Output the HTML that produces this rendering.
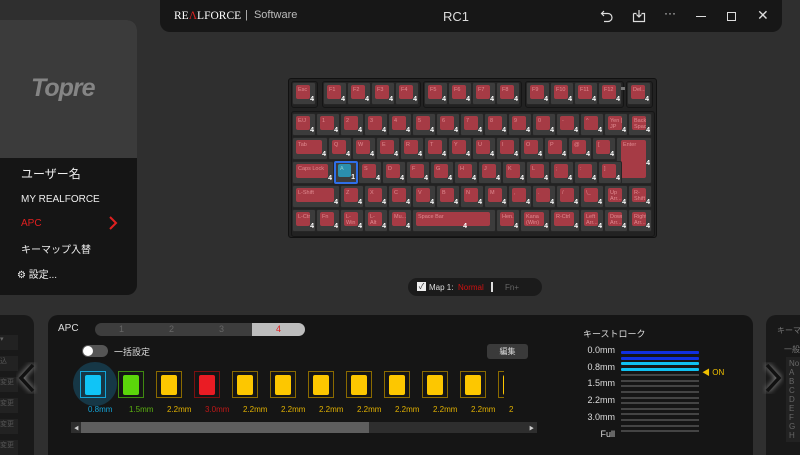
<!DOCTYPE html>
<html><head><meta charset="utf-8"><style>
*{box-sizing:border-box;margin:0;padding:0}
body{width:800px;height:455px;overflow:hidden;background:#2f2f2f;font-family:"Liberation Sans","Noto Sans CJK JP",sans-serif;color:#ddd;position:relative}
.a{position:absolute}
.title{left:160px;top:0;width:622px;height:32px;background:#171717;border-radius:0 0 10px 10px}
.lp{left:0;top:20px;width:137px;height:275px;background:#151515;border-radius:0 10px 10px 0;overflow:hidden}
.kb{left:288px;top:78px;width:369px;height:160px;background:#222;border:1px solid #111;border-radius:3px}
.k{position:absolute;height:23px;background:#3c3c3c;border:1px solid #262626;border-radius:2px}
.k i{position:absolute;left:3px;top:2px;right:5px;bottom:5px;background:#a63b45;border-radius:2px;font-style:normal;font-size:5.5px;color:#e08a90;padding:2px 0 0 2px;line-height:6px;overflow:hidden;white-space:nowrap}
.k b{position:absolute;right:1px;bottom:1px;font-size:7px;color:#fff;line-height:7px}
.grp{position:absolute;border:1px solid #151515;border-radius:3px;height:27px;top:2px}
.sw{position:absolute;top:56px;width:26px;height:27px;border:1px solid #8a6a00}
.sw div{position:absolute;left:4px;top:3px;width:16px;height:20px;background:#fdc700;border-radius:2px}
.gl{position:absolute;left:573px;width:78px;height:2px;background:#444}
</style></head><body>

<div class="a title">
 <div class="a" style="left:14px;top:10px;font-family:'Liberation Serif',serif;font-size:11.5px;color:#fff;white-space:nowrap">RE<span style="color:#d22">Λ</span>LFORCE</div>
 <div class="a" style="left:85px;top:9px;font-size:11px;color:#bbb;white-space:nowrap">|&nbsp; Software</div>
 <div class="a" style="left:283px;top:9px;font-size:13px;color:#ddd">RC1</div>
 <svg class="a" style="left:440px;top:9px" width="14" height="14" viewBox="0 0 14 14" fill="none" stroke="#ddd" stroke-width="1.2"><path d="M4 2L1.5 4.5 4 7M1.5 4.5H8a4 4 0 010 8H4"/></svg>
 <svg class="a" style="left:472px;top:9px" width="14" height="14" viewBox="0 0 14 14" fill="none" stroke="#ddd" stroke-width="1.2"><path d="M1.5 4.5h3M9.5 4.5h3v8h-11v-8M7 1v7M4.5 5.5 7 8l2.5-2.5"/></svg>
 <div class="a" style="left:504px;top:6px;font-size:12px;color:#ddd">···</div>
 <div class="a" style="left:536px;top:16px;width:10px;height:1px;background:#ddd"></div>
 <div class="a" style="left:567px;top:12px;width:9px;height:9px;border:1px solid #ddd"></div>
 <div class="a" style="left:597px;top:7px;font-size:14px;color:#ddd">✕</div>
</div>

<div class="a lp">
 <div class="a" style="left:0;top:0;width:137px;height:138px;background:#3b3b3b"></div>
 <div class="a" style="left:31px;top:54px;font-size:25px;font-weight:bold;font-style:italic;color:#858585;letter-spacing:-1px">Topre</div>
 <div class="a" style="left:21px;top:145px;font-size:12px;color:#eee">ユーザー名</div>
 <div class="a" style="left:21px;top:174px;font-size:10px;color:#eee">MY REALFORCE</div>
 <div class="a" style="left:21px;top:198px;font-size:10px;color:#e02020">APC</div>
 <svg class="a" style="left:108px;top:196px" width="10" height="14" viewBox="0 0 10 14"><path d="M2 1l6 6-6 6" stroke="#e02020" stroke-width="2" fill="none"/></svg>
 <div class="a" style="left:21px;top:221px;font-size:10px;color:#eee">キーマップ入替</div>
 <div class="a" style="left:17px;top:246px;font-size:10px;color:#eee">⚙ 設定...</div>
</div>

<div class="a kb">
 <div class="grp" style="left:2px;width:27px"></div>
 <div class="grp" style="left:33px;width:99px"></div>
 <div class="grp" style="left:134px;width:99px"></div>
 <div class="grp" style="left:236px;width:99px"></div>
 <div class="grp" style="left:337px;width:27px"></div>
 <div class="grp" style="left:2px;top:32px;width:364px;height:126px"></div>
 <div class="k" style="left:3px;top:3px;width:24px"><i>Esc</i><b>4</b></div>
 <div class="k" style="left:34px;top:3px;width:24px"><i>F1</i><b>4</b></div>
 <div class="k" style="left:58px;top:3px;width:24px"><i>F2</i><b>4</b></div>
 <div class="k" style="left:82px;top:3px;width:24px"><i>F3</i><b>4</b></div>
 <div class="k" style="left:106px;top:3px;width:24px"><i>F4</i><b>4</b></div>
 <div class="k" style="left:135px;top:3px;width:24px"><i>F5</i><b>4</b></div>
 <div class="k" style="left:159px;top:3px;width:24px"><i>F6</i><b>4</b></div>
 <div class="k" style="left:183px;top:3px;width:24px"><i>F7</i><b>4</b></div>
 <div class="k" style="left:207px;top:3px;width:24px"><i>F8</i><b>4</b></div>
 <div class="k" style="left:237px;top:3px;width:24px"><i>F9</i><b>4</b></div>
 <div class="k" style="left:261px;top:3px;width:24px"><i>F10</i><b>4</b></div>
 <div class="k" style="left:285px;top:3px;width:24px"><i>F11</i><b>4</b></div>
 <div class="k" style="left:309px;top:3px;width:24px"><i>F12</i><b>4</b></div>
 <div class="a" style="left:332px;top:8px;width:4px;height:3px;background:#777"></div>
 <div class="k" style="left:338px;top:3px;width:24px"><i>Del...</i><b>4</b></div>
 <div class="k" style="left:3px;top:34px;width:24px"><i>E/J</i><b>4</b></div>
 <div class="k" style="left:27px;top:34px;width:24px"><i>1</i><b>4</b></div>
 <div class="k" style="left:51px;top:34px;width:24px"><i>2</i><b>4</b></div>
 <div class="k" style="left:75px;top:34px;width:24px"><i>3</i><b>4</b></div>
 <div class="k" style="left:99px;top:34px;width:24px"><i>4</i><b>4</b></div>
 <div class="k" style="left:123px;top:34px;width:24px"><i>5</i><b>4</b></div>
 <div class="k" style="left:147px;top:34px;width:24px"><i>6</i><b>4</b></div>
 <div class="k" style="left:171px;top:34px;width:24px"><i>7</i><b>4</b></div>
 <div class="k" style="left:195px;top:34px;width:24px"><i>8</i><b>4</b></div>
 <div class="k" style="left:219px;top:34px;width:24px"><i>9</i><b>4</b></div>
 <div class="k" style="left:243px;top:34px;width:24px"><i>0</i><b>4</b></div>
 <div class="k" style="left:267px;top:34px;width:24px"><i>-</i><b>4</b></div>
 <div class="k" style="left:291px;top:34px;width:24px"><i>^</i><b>4</b></div>
 <div class="k" style="left:315px;top:34px;width:24px"><i>Yen |<br>JP</i><b>4</b></div>
 <div class="k" style="left:339px;top:34px;width:24px"><i>Back<br>Space</i><b>4</b></div>
 <div class="k" style="left:3px;top:58px;width:36px"><i>Tab</i><b>4</b></div>
 <div class="k" style="left:39px;top:58px;width:24px"><i>Q</i><b>4</b></div>
 <div class="k" style="left:63px;top:58px;width:24px"><i>W</i><b>4</b></div>
 <div class="k" style="left:87px;top:58px;width:24px"><i>E</i><b>4</b></div>
 <div class="k" style="left:111px;top:58px;width:24px"><i>R</i><b>4</b></div>
 <div class="k" style="left:135px;top:58px;width:24px"><i>T</i><b>4</b></div>
 <div class="k" style="left:159px;top:58px;width:24px"><i>Y</i><b>4</b></div>
 <div class="k" style="left:183px;top:58px;width:24px"><i>U</i><b>4</b></div>
 <div class="k" style="left:207px;top:58px;width:24px"><i>I</i><b>4</b></div>
 <div class="k" style="left:231px;top:58px;width:24px"><i>O</i><b>4</b></div>
 <div class="k" style="left:255px;top:58px;width:24px"><i>P</i><b>4</b></div>
 <div class="k" style="left:279px;top:58px;width:24px"><i>@</i><b>4</b></div>
 <div class="k" style="left:303px;top:58px;width:24px"><i>[</i><b>4</b></div>
 <div class="k" style="left:327px;top:58px;width:36px;height:47px"><i style="left:4px">Enter</i><b style="bottom:16px">4</b></div>
 <div class="k" style="left:3px;top:82px;width:42px"><i>Caps Lock</i><b>4</b></div>
 <div class="k" style="left:45px;top:82px;width:24px;border:2px solid #2f6fe8"><i style="background:#2b8fae;left:2px;top:1px;color:#8cc">A</i><b>1</b></div>
 <div class="k" style="left:69px;top:82px;width:24px"><i>S</i><b>4</b></div>
 <div class="k" style="left:93px;top:82px;width:24px"><i>D</i><b>4</b></div>
 <div class="k" style="left:117px;top:82px;width:24px"><i>F</i><b>4</b></div>
 <div class="k" style="left:141px;top:82px;width:24px"><i>G</i><b>4</b></div>
 <div class="k" style="left:165px;top:82px;width:24px"><i>H</i><b>4</b></div>
 <div class="k" style="left:189px;top:82px;width:24px"><i>J</i><b>4</b></div>
 <div class="k" style="left:213px;top:82px;width:24px"><i>K</i><b>4</b></div>
 <div class="k" style="left:237px;top:82px;width:24px"><i>L</i><b>4</b></div>
 <div class="k" style="left:261px;top:82px;width:24px"><i>;</i><b>4</b></div>
 <div class="k" style="left:285px;top:82px;width:24px"><i>:</i><b>4</b></div>
 <div class="k" style="left:309px;top:82px;width:24px"><i>]</i><b>4</b></div>
 <div class="k" style="left:3px;top:106px;width:48px"><i>L-Shift</i><b>4</b></div>
 <div class="k" style="left:51px;top:106px;width:24px"><i>Z</i><b>4</b></div>
 <div class="k" style="left:75px;top:106px;width:24px"><i>X</i><b>4</b></div>
 <div class="k" style="left:99px;top:106px;width:24px"><i>C</i><b>4</b></div>
 <div class="k" style="left:123px;top:106px;width:24px"><i>V</i><b>4</b></div>
 <div class="k" style="left:147px;top:106px;width:24px"><i>B</i><b>4</b></div>
 <div class="k" style="left:171px;top:106px;width:24px"><i>N</i><b>4</b></div>
 <div class="k" style="left:195px;top:106px;width:24px"><i>M</i><b>4</b></div>
 <div class="k" style="left:219px;top:106px;width:24px"><i>,</i><b>4</b></div>
 <div class="k" style="left:243px;top:106px;width:24px"><i>.</i><b>4</b></div>
 <div class="k" style="left:267px;top:106px;width:24px"><i>/</i><b>4</b></div>
 <div class="k" style="left:291px;top:106px;width:24px"><i>\_</i><b>4</b></div>
 <div class="k" style="left:315px;top:106px;width:24px"><i>Up<br>Arr...</i><b>4</b></div>
 <div class="k" style="left:339px;top:106px;width:24px"><i>R-<br>Shift</i><b>4</b></div>
 <div class="k" style="left:3px;top:130px;width:24px"><i>L-Ctrl</i><b>4</b></div>
 <div class="k" style="left:27px;top:130px;width:24px"><i>Fn</i><b>4</b></div>
 <div class="k" style="left:51px;top:130px;width:24px"><i>L-<br>Win</i><b>4</b></div>
 <div class="k" style="left:75px;top:130px;width:24px"><i>L-<br>Alt</i><b>4</b></div>
 <div class="k" style="left:99px;top:130px;width:24px"><i>Mu...</i><b>4</b></div>
 <div class="k" style="left:123px;top:130px;width:84px"><i>Space Bar</i><b style="right:28px">4</b></div>
 <div class="k" style="left:207px;top:130px;width:24px"><i>Hen...</i><b>4</b></div>
 <div class="k" style="left:231px;top:130px;width:30px"><i>Kana<br>(Win)</i><b>4</b></div>
 <div class="k" style="left:261px;top:130px;width:30px"><i>R-Ctrl</i><b>4</b></div>
 <div class="k" style="left:291px;top:130px;width:24px"><i>Left<br>Arr...</i><b>4</b></div>
 <div class="k" style="left:315px;top:130px;width:24px"><i>Down<br>Arr...</i><b>4</b></div>
 <div class="k" style="left:339px;top:130px;width:24px"><i>Right<br>Arr...</i><b>4</b></div>
</div>

<div class="a" style="left:408px;top:278px;width:134px;height:18px;background:#1b1b1b;border-radius:9px">
 <div class="a" style="left:9px;top:4px;width:9px;height:9px;background:#eee;font-size:8px;color:#333;line-height:9px;text-align:center">✓</div>
 <div class="a" style="left:21px;top:5px;font-size:8px;color:#ddd">Map 1:</div>
 <div class="a" style="left:50px;top:5px;font-size:8px;color:#d01010">Normal</div>
 <div class="a" style="left:83px;top:4px;width:2px;height:10px;background:#ddd"></div>
 <div class="a" style="left:97px;top:5px;font-size:8px;color:#666">Fn+</div>
</div>

<div class="a" style="left:0;top:315px;width:34px;height:140px;background:#191919;border-radius:0 10px 0 0;overflow:hidden">
 <div class="a" style="left:0;top:20px;width:18px;height:15px;background:#222;font-size:7px;color:#666">▾</div>
 <div class="a" style="left:0;top:41px;width:18px;height:15px;background:#222;font-size:7px;color:#555">込</div>
 <div class="a" style="left:0;top:62px;width:18px;height:15px;background:#222;font-size:7px;color:#555">変更</div>
 <div class="a" style="left:0;top:83px;width:18px;height:15px;background:#222;font-size:7px;color:#555">変更</div>
 <div class="a" style="left:0;top:104px;width:18px;height:15px;background:#222;font-size:7px;color:#555">変更</div>
 <div class="a" style="left:0;top:125px;width:18px;height:15px;background:#222;font-size:7px;color:#555">変更</div>
</div>
<svg class="a" style="left:16px;top:362px" width="22" height="32" viewBox="0 0 22 32"><path d="M17 3L5 16l12 13" stroke="#111" stroke-width="3.5" fill="none" style="filter:drop-shadow(0 0 3px #aaa)"/></svg>

<div class="a" style="left:766px;top:315px;width:34px;height:140px;background:#191919;border-radius:10px 0 0 0;overflow:hidden;white-space:nowrap">
 <div class="a" style="left:11px;top:10px;font-size:8px;color:#777">キーマ</div>
 <div class="a" style="left:18px;top:29px;font-size:8px;color:#777">一般</div>
 <div class="a" style="left:20px;top:42px;width:14px;height:85px;background:#222;font-size:8px;color:#666;line-height:9px;padding:2px 0 0 3px">No<br>A<br>B<br>C<br>D<br>E<br>F<br>G<br>H</div>
</div>
<svg class="a" style="left:762px;top:362px" width="22" height="32" viewBox="0 0 22 32"><path d="M5 3l12 13L5 29" stroke="#111" stroke-width="3.5" fill="none" style="filter:drop-shadow(0 0 3px #aaa)"/></svg>

<div class="a" style="left:48px;top:315px;width:705px;height:140px;background:#151515;border-radius:10px 10px 0 0">
 <div class="a" style="left:10px;top:8px;font-size:10px;color:#ddd">APC</div>
 <div class="a" style="left:47px;top:8px;width:210px;height:13px;background:#3d3d3d;border-radius:7px;font-size:9px;color:#666">
  <span class="a" style="left:24px;top:1px">1</span><span class="a" style="left:74px;top:1px">2</span><span class="a" style="left:124px;top:1px">3</span>
  <div class="a" style="left:157px;top:0;width:53px;height:13px;background:#bdbdbd;border-radius:0 7px 7px 0;color:#e02020;text-align:center;line-height:13px">4</div>
 </div>
 <div class="a" style="left:34px;top:30px;width:26px;height:12px;background:#555;border-radius:6px"><div class="a" style="left:1px;top:1px;width:10px;height:10px;border-radius:5px;background:#fff"></div></div>
 <div class="a" style="left:66px;top:30px;font-size:9px;color:#ddd">一括設定</div>
 <div class="a" style="left:439px;top:29px;width:41px;height:15px;background:#3a3a3a;border-radius:3px;font-size:8px;color:#ddd;text-align:center;line-height:15px">編集</div>

 <div class="a" style="left:25px;top:47px;width:44px;height:44px;border-radius:22px;background:#163746"></div>
 <div class="sw" style="left:32px;border-color:#13a4d8"><div style="background:#10c4f6"></div></div>
 <div class="sw" style="left:70px;border-color:#3f8a10"><div style="background:#5bd60a"></div></div>
 <div class="sw" style="left:108px"><div></div></div>
 <div class="sw" style="left:146px;border-color:#7a1010"><div style="background:#ea1c24"></div></div>
 <div class="sw" style="left:184px"><div></div></div>
 <div class="sw" style="left:222px"><div></div></div>
 <div class="sw" style="left:260px"><div></div></div>
 <div class="sw" style="left:298px"><div></div></div>
 <div class="sw" style="left:336px"><div></div></div>
 <div class="sw" style="left:374px"><div></div></div>
 <div class="sw" style="left:412px"><div></div></div>
 <div class="a" style="left:450px;top:56px;width:6px;height:27px;overflow:hidden"><div class="sw" style="left:0;top:0"><div></div></div></div>
 <div class="a" style="top:90px;left:22px;width:440px;height:10px;font-size:8px;white-space:nowrap">
  <span class="a" style="left:18px;color:#13a4d8">0.8mm</span>
  <span class="a" style="left:59px;color:#5bb010">1.5mm</span>
  <span class="a" style="left:97px;color:#e0b000">2.2mm</span>
  <span class="a" style="left:135px;color:#c01818">3.0mm</span>
  <span class="a" style="left:173px;color:#e0b000">2.2mm</span>
  <span class="a" style="left:211px;color:#e0b000">2.2mm</span>
  <span class="a" style="left:249px;color:#e0b000">2.2mm</span>
  <span class="a" style="left:287px;color:#e0b000">2.2mm</span>
  <span class="a" style="left:325px;color:#e0b000">2.2mm</span>
  <span class="a" style="left:363px;color:#e0b000">2.2mm</span>
  <span class="a" style="left:401px;color:#e0b000">2.2mm</span>
  <span class="a" style="left:439px;color:#e0b000">2</span>
 </div>
 <div class="a" style="left:23px;top:107px;width:466px;height:11px;background:#2e2e2e">
  <div class="a" style="left:10px;top:0;width:288px;height:11px;background:#5e5e5e"></div>
  <div class="a" style="left:3px;top:3px;font-size:5px;color:#ccc">◀</div>
  <div class="a" style="left:458px;top:3px;font-size:5px;color:#ccc">▶</div>
 </div>

 <div class="a" style="left:535px;top:12px;font-size:9px;color:#ddd">キーストローク</div>
 <div class="a" style="left:520px;top:27px;width:47px;text-align:right;font-size:9px;color:#ddd;line-height:16.7px">0.0mm<br>0.8mm<br>1.5mm<br>2.2mm<br>3.0mm<br>Full</div>
 <div class="a" style="left:573px;top:36px;width:78px;height:3px;background:#1030e0;border-radius:1px"></div>
 <div class="a" style="left:573px;top:42px;width:78px;height:3px;background:#1030e0;border-radius:1px"></div>
 <div class="a" style="left:573px;top:47px;width:78px;height:3px;background:#10c0f0;border-radius:1px"></div>
 <div class="a" style="left:573px;top:53px;width:78px;height:3px;background:#10c0f0;border-radius:1px"></div>
 <div class="gl" style="top:59px"></div><div class="gl" style="top:65px"></div><div class="gl" style="top:70px"></div>
 <div class="gl" style="top:76px"></div><div class="gl" style="top:82px"></div><div class="gl" style="top:87px"></div>
 <div class="gl" style="top:93px"></div><div class="gl" style="top:98px"></div><div class="gl" style="top:104px"></div>
 <div class="gl" style="top:110px"></div><div class="gl" style="top:115px"></div>
 <div class="a" style="left:654px;top:52px;font-size:8px;color:#f0c000;white-space:nowrap">◀ ON</div>
</div>
</body></html>
